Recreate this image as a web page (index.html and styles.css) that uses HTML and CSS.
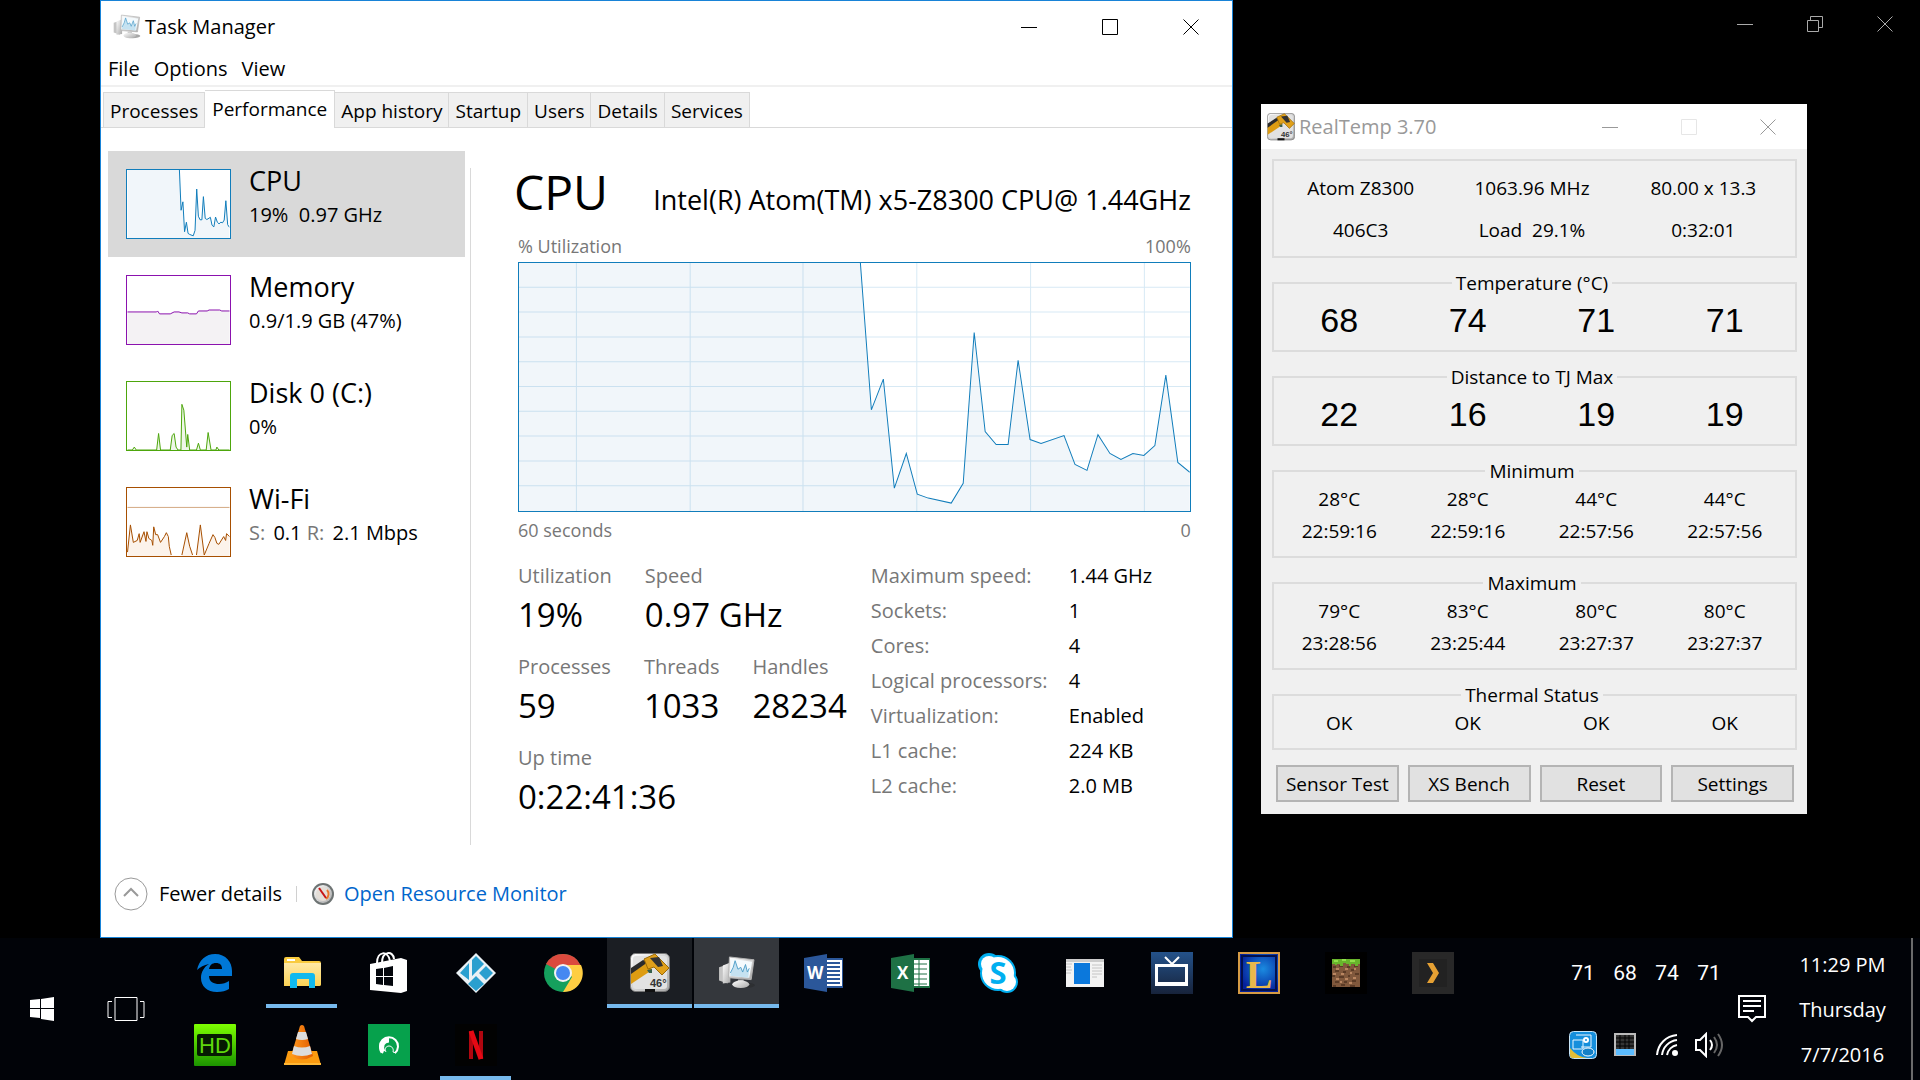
FILE: index.html
```html
<!DOCTYPE html>
<html lang="en">
<head>
	<meta charset="utf-8">
	<title>Task Manager</title>
	<link rel="stylesheet" href="styles.css">
</head>
<body>

	<!-- Shared drawings -->
	<svg class="defs" width="0" height="0" aria-hidden="true">
		<defs>
			<linearGradient id="metal" x1="0" y1="0" x2="1" y2="1">
				<stop offset="0" stop-color="#fff"/>
				<stop offset="1" stop-color="#a8a8a8"/>
			</linearGradient>
			<linearGradient id="green" x1="0" y1="0" x2="0" y2="1">
				<stop offset="0" stop-color="#7dff00"/>
				<stop offset="1" stop-color="#1c9400"/>
			</linearGradient>
			<linearGradient id="navy" x1="0" y1="0" x2="0" y2="1">
				<stop offset="0" stop-color="#24528a"/>
				<stop offset="1" stop-color="#17233b"/>
			</linearGradient>
			<linearGradient id="orange" x1="0" y1="0" x2="1" y2="0">
				<stop offset="0" stop-color="#ff9a1e"/>
				<stop offset="1" stop-color="#e35b00"/>
			</linearGradient>
			<linearGradient id="paper" x1="0" y1="0" x2="0" y2="1">
				<stop offset="0" stop-color="#ffe9a6"/>
				<stop offset="1" stop-color="#fbd355"/>
			</linearGradient>
			<radialGradient id="gem" cx=".6" cy=".4" r=".6">
				<stop offset="0" stop-color="#1b8be0"/>
				<stop offset="1" stop-color="#04209a"/>
			</radialGradient>
		</defs>
		<symbol id="cpu-trace" viewBox="0 0 672 250" preserveAspectRatio="none">
			<path class="area" d="M0 0H342L353 148L365 117L376 227L388 192L399 233L410 237L433 242L445 222L456 70L467 170L478 183H490L500 98L512 178L523 182L546 174L557 203L569 209L580 173L592 192L603 198L615 192L626 194L637 184L648 113L660 201L672 211V250H0Z"/>
			<path class="line" d="M342 0L353 148L365 117L376 227L388 192L399 233L410 237L433 242L445 222L456 70L467 170L478 183H490L500 98L512 178L523 182L546 174L557 203L569 209L580 173L592 192L603 198L615 192L626 194L637 184L648 113L660 201L672 211"/>
		</symbol>
		<symbol id="monitor" viewBox="0 0 40 36">
			<path d="M1 12l9-3v20l-9-3z" fill="#c4c4c4"/>
			<path d="M5 10l8-3v21l-8 1z" fill="url(#metal)"/>
			<ellipse cx="28" cy="31" rx="11" ry="3" fill="#222" opacity=".4"/>
			<path d="M21 25h6v5h-6z" fill="#bbb"/>
			<ellipse cx="24" cy="30" rx="9" ry="4" fill="url(#metal)"/>
			<path d="M12 1l26 3-3 21-24-2z" fill="url(#metal)" stroke="#b4b4b4"/>
			<path d="M14 3l22 3-3 17-21-2z" fill="#f4fafd"/>
			<path d="M13 19l3-7 2-7 3 9 3-2 2 5 3-8 2 8 2-4-1 10-19-2z" fill="#c5e2f1"/>
			<path d="M13 18l3-6 2-7 3 9 3-2 2 5 3-8 2 8 2-4" fill="none" stroke="#4f9dc8"/>
		</symbol>
		<symbol id="caliper" viewBox="0 0 40 40">
			<rect x=".5" y=".5" width="39" height="38" rx="5" fill="url(#metal)" stroke="#777"/>
			<rect x="3" y="3" width="34" height="33" rx="3" fill="#e2e2e2"/>
			<path d="M1 20L18 8l4 9L1 31z" fill="#dd9c12"/>
			<path d="M1 15L13 7l5 2L1 21z" fill="#2b2b2b"/>
			<path d="M14 6L25 1l14 14-7 7-8-8-6 2z" fill="#e0a01a" stroke="#9c6b06"/>
			<path d="M20 5l9-1 4 9-5 1z" fill="#333"/>
			<path d="M17 17l5-1v4h-3z" fill="#37604d"/>
			<text x="20" y="34" class="caliper-text">46°</text>
			<path d="M15 36h10v3H15z" fill="#111"/>
		</symbol>
	</svg>

	<div class="desktop">

		<!-- Caption buttons of the maximised window behind -->
		<div class="caption-buttons back">
			<button class="cap" aria-label="Minimize"><svg width="16" height="16"><path d="M0 8.500h16"/></svg></button>
			<button class="cap" aria-label="Restore"><svg width="16" height="16"><path d="M.5 4.500h11v11H.500zM3.500 4V.5h12v11h-4"/></svg></button>
			<button class="cap" aria-label="Close"><svg width="16" height="16"><path d="M.5.500l15 15m0-15l-15 15"/></svg></button>
		</div>

		<section class="window taskmgr">
			<header class="titlebar">
				<svg class="app-icon" width="28" height="26"><use href="#monitor"/></svg>
				<span class="title">Task Manager</span>
				<div class="caption-buttons">
					<button class="cap" aria-label="Minimize"><svg width="16" height="16"><path d="M0 8.500h16"/></svg></button>
					<button class="cap" aria-label="Maximize"><svg width="16" height="16"><path d="M.5.500h15v15H.500z"/></svg></button>
					<button class="cap" aria-label="Close"><svg width="16" height="16"><path d="M.5.500l15 15m0-15l-15 15"/></svg></button>
				</div>
			</header>

			<nav class="menu">
				<button>File</button>
				<button>Options</button>
				<button>View</button>
			</nav>

			<div class="tabs">
				<button class="tab">Processes</button>
				<button class="tab active">Performance</button>
				<button class="tab">App history</button>
				<button class="tab">Startup</button>
				<button class="tab">Users</button>
				<button class="tab">Details</button>
				<button class="tab">Services</button>
			</div>

			<div class="page">
				<nav class="resources">
					<button class="resource selected">
						<svg class="thumb cpu" viewBox="0 0 105 70"><use href="#cpu-trace" width="105" height="70"/></svg>
						<span class="info"><span class="name">CPU</span><span class="detail">19%&nbsp; 0.97 GHz</span></span>
					</button>
					<button class="resource">
						<svg class="thumb memory" viewBox="0 0 105 70">
							<path class="area" d="M0 37H31L33 39H44L48 37L62 38L64 39H71L73 36L84 35H95L105 36V70H0Z"/>
							<path class="line" d="M0 37H30L31 36L33 39H44L48 37H53L56 38H62L64 39H71L73 36H82L84 35H95L97 36H105"/>
						</svg>
						<span class="info"><span class="name">Memory</span><span class="detail">0.9/1.9 GB (47%)</span></span>
					</button>
					<button class="resource">
						<svg class="thumb disk" viewBox="0 0 105 70">
							<path class="area line" d="M0 70H5L7 67L9 70H30L32 53L34 70H44L46 55L48 53L50 67L52 70H55L56 23L58 29L61 67L62 54L64 70H71L73 63L75 70H81L83 52L86 70H91L92 67L94 70H105"/>
						</svg>
						<span class="info"><span class="name">Disk 0 (C:)</span><span class="detail">0%</span></span>
					</button>
					<button class="resource">
						<svg class="thumb wifi" viewBox="0 0 105 70">
							<path class="area" d="M0 70L3 38L6 56L17 46L26 59L27 40L34 56L40 46L45 70ZM56 70L61 46L67 70ZM71 70L75 38L79 70L88 48L94 58L102 47L105 50V70Z"/>
							<path class="level" d="M0 20H105"/>
							<path class="line" d="M0 66L3 38L6 56L10 54L12 47L13 56L17 45L19 55L20 45L22 52L25 54L26 59L27 40L29 48H31L34 56L38 50L40 46L42 50L43 60L45 69M56 69L61 46L64 60L67 69M71 69L75 38L79 69L84 57L88 48L90 51L92 57L94 58L99 50L101 54L102 47L105 50"/>
						</svg>
						<span class="info"><span class="name">Wi-Fi</span><span class="detail"><i>S:</i> 0.1 <i>R:</i> 2.1 Mbps</span></span>
					</button>
				</nav>

				<main class="panel">
					<div class="heading">
						<h1>CPU</h1>
						<h2>Intel(R) Atom(TM) x5-Z8300 CPU@ 1.44GHz</h2>
					</div>
					<div class="scale"><span>% Utilization</span><span>100%</span></div>
					<svg class="chart cpu" viewBox="0 0 672 250" preserveAspectRatio="none">
						<use href="#cpu-trace" width="672" height="250"/>
						<path class="grid" d="M57.500 0V250M171.500 0V250M284.500 0V250M398.500 0V250M512.500 0V250M626.500 0V250M0 24.500H672M0 49.500H672M0 74.500H672M0 99.500H672M0 124.500H672M0 149.500H672M0 174.500H672M0 199.500H672M0 224.500H672"/>
					</svg>
					<div class="scale bottom"><span>60 seconds</span><span>0</span></div>

					<div class="stats">
						<div class="counters">
							<dl class="pair">
								<div><dt>Utilization</dt><dd>19%</dd></div>
								<div><dt>Speed</dt><dd>0.97 GHz</dd></div>
							</dl>
							<dl class="pair">
								<div><dt>Processes</dt><dd>59</dd></div>
								<div><dt>Threads</dt><dd>1033</dd></div>
								<div><dt>Handles</dt><dd>28234</dd></div>
							</dl>
							<dl class="pair">
								<div><dt>Up time</dt><dd>0:22:41:36</dd></div>
							</dl>
						</div>
						<table class="specs">
							<tr><th>Maximum speed:</th><td>1.44 GHz</td></tr>
							<tr><th>Sockets:</th><td>1</td></tr>
							<tr><th>Cores:</th><td>4</td></tr>
							<tr><th>Logical processors:</th><td>4</td></tr>
							<tr><th>Virtualization:</th><td>Enabled</td></tr>
							<tr><th>L1 cache:</th><td>224 KB</td></tr>
							<tr><th>L2 cache:</th><td>2.0 MB</td></tr>
						</table>
					</div>
				</main>
			</div>

			<footer class="footer">
				<button class="fewer">
					<svg width="34" height="34"><circle cx="17" cy="17" r="16" fill="none" stroke="#999"/><path d="M10 19l7-7 7 7" fill="none" stroke="#999" stroke-width="2"/></svg>
					Fewer details
				</button>
				<span class="divider"></span>
				<a class="monitor-link" href="#">
					<svg width="24" height="24" viewBox="0 0 24 24">
						<circle cx="12" cy="12" r="11" fill="#6d7373"/>
						<circle cx="12" cy="12" r="9" fill="url(#metal)"/>
						<circle cx="12" cy="12" r="7" fill="#e4ded7"/>
						<path d="M16 8a6 6 0 0 1-1 9" fill="none" stroke="#e8762c" stroke-width="2"/>
						<path d="M8 6l7 10" stroke="#c81414" stroke-width="2"/>
					</svg>
					Open Resource Monitor
				</a>
			</footer>
		</section>

		<section class="window realtemp">
			<header class="titlebar">
				<svg class="app-icon" width="28" height="28"><use href="#caliper"/></svg>
				<span class="title">RealTemp 3.70</span>
				<div class="caption-buttons">
					<button class="cap" aria-label="Minimize"><svg width="16" height="16"><path d="M0 8.500h16"/></svg></button>
					<button class="cap" aria-label="Maximize" disabled><svg width="16" height="16"><path d="M.5.500h15v15H.500z"/></svg></button>
					<button class="cap" aria-label="Close"><svg width="16" height="16"><path d="M.5.500l15 15m0-15l-15 15"/></svg></button>
				</div>
			</header>
			<div class="client">
				<fieldset class="summary">
					<div class="cells three"><span>Atom Z8300</span><span>1063.96 MHz</span><span>80.00 x 13.3</span></div>
					<div class="cells three"><span>406C3</span><span>Load&nbsp; 29.1%</span><span>0:32:01</span></div>
				</fieldset>
				<fieldset>
					<legend>Temperature (°C)</legend>
					<div class="cells big"><span>68</span><span>74</span><span>71</span><span>71</span></div>
				</fieldset>
				<fieldset>
					<legend>Distance to TJ Max</legend>
					<div class="cells big"><span>22</span><span>16</span><span>19</span><span>19</span></div>
				</fieldset>
				<fieldset>
					<legend>Minimum</legend>
					<div class="cells"><span>28°C</span><span>28°C</span><span>44°C</span><span>44°C</span></div>
					<div class="cells"><span>22:59:16</span><span>22:59:16</span><span>22:57:56</span><span>22:57:56</span></div>
				</fieldset>
				<fieldset>
					<legend>Maximum</legend>
					<div class="cells"><span>79°C</span><span>83°C</span><span>80°C</span><span>80°C</span></div>
					<div class="cells"><span>23:28:56</span><span>23:25:44</span><span>23:27:37</span><span>23:27:37</span></div>
				</fieldset>
				<fieldset>
					<legend>Thermal Status</legend>
					<div class="cells"><span>OK</span><span>OK</span><span>OK</span><span>OK</span></div>
				</fieldset>
				<div class="actions">
					<button>Sensor Test</button>
					<button>XS Bench</button>
					<button>Reset</button>
					<button>Settings</button>
				</div>
			</div>
		</section>
	</div>

	<!-- Taskbar -->
	<div class="taskbar">
		<button class="shell" aria-label="Start">
			<svg width="24" height="24" fill="#fff"><path d="M0 3l10-1v9H0zM11 2l13-2v11H11zM0 12h10v9L0 20zM11 12h13v12l-13-2z"/></svg>
		</button>
		<button class="shell" aria-label="Task View">
			<svg width="38" height="26" fill="none" stroke="#fff"><path d="M8 1.500h22v23H8zM5 5.500H1v16h4M33 5.500h4v16h-4"/></svg>
		</button>
		<div class="apps">
			<button class="app" aria-label="Edge">
				<svg width="42" height="42"><path d="M3 18C5 8 12 2 21 2c11 0 17 8 17 17v5H15c0 6 5 8 10 8 4 0 7-1 10-3v8c-3 2-7 3-12 3C13 40 7 34 7 26c0-6 3-11 8-14-5 1-9 3-12 6zm12-1h13c0-4-2-6-6-6s-6 2-7 6z" fill="#0078d7"/></svg>
			</button>
			<button class="app running" aria-label="File Explorer">
				<svg width="42" height="42"><path d="M3 7q0-2 2-2h13l3 4h17q2 0 2 2v21q0 2-2 2H3z" fill="#f9cb3f"/><path d="M3 11h37v21q0 2-2 2H5q-2 0-2-2z" fill="url(#paper)"/><path d="M6 8h8" stroke="#fff" stroke-width="2"/><path d="M9 36V24q0-3 3-3h19q3 0 3 3v12h-6v-9H16v9z" fill="#10b9ee"/></svg>
			</button>
			<button class="app" aria-label="Store">
				<svg width="42" height="42"><path d="M9 11C9-1 20-2 22 9M14 11c0-12 11-13 12-4" fill="none" stroke="#fff" stroke-width="2"/><path d="M2 12l31-6 6 2v31l-6 2-31-3z" fill="#fff"/><path d="M8 17l7-1v8H8zM16 16l9-2v10h-9zM8 25h7v8l-7-1zM16 25h9v9l-9-1z" fill="#03060c"/></svg>
			</button>
			<button class="app" aria-label="Kodi">
				<svg width="42" height="42"><path d="M21 1l20 20-20 20L1 21z" fill="#e9f1f5"/><path d="M21 4l8 8-12 12V8zM14 11v17l-9-7zM31 14l7 7-7 7-7-7zM21 24l8 8-8 7-8-7z" fill="#2a9fcf"/></svg>
			</button>
			<button class="app" aria-label="Chrome">
				<svg width="42" height="42" viewBox="0 0 42 42"><circle cx="21" cy="21" r="19" fill="#15a05d"/><path d="M21 21L4 12A19.500 19.500 0 0 1 38.500 13z" fill="#db4a3e"/><path d="M21 13h18a19 19 0 0 1-18 27l9-15z" fill="#ffce42"/><circle cx="21" cy="21" r="9" fill="#f3f3f3"/><circle cx="21" cy="21" r="7" fill="#4688f1"/></svg>
			</button>
			<button class="app running window-open" aria-label="RealTemp">
				<svg width="40" height="40"><use href="#caliper"/></svg>
			</button>
			<button class="app running focused" aria-label="Task Manager">
				<svg width="38" height="34"><use href="#monitor"/></svg>
			</button>
			<button class="app" aria-label="Word">
				<svg width="42" height="42"><path d="M20 6h20v30H20z" fill="#2b579a"/><path d="M23 8h16v26H23z" fill="#fff"/><path d="M23 11h14M23 15h14M23 19h14M23 23h14M23 27h14M23 31h14" stroke="#2b579a" stroke-width="2"/><path d="M1 6l23-4v38L1 36z" fill="#2b579a"/><text x="4" y="27" class="office">W</text></svg>
			</button>
			<button class="app" aria-label="Excel">
				<svg width="42" height="42"><path d="M20 6h20v30H20z" fill="#1e7145"/><path d="M23 8h16v26H23z" fill="#fff"/><path d="M23 12h14M23 17h14M23 22h14M23 27h14M23 32h14M29 8v26" stroke="#1e7145"/><path d="M1 6l23-4v38L1 36z" fill="#1e7145"/><text x="7" y="27" class="office">X</text></svg>
			</button>
			<button class="app" aria-label="Skype">
				<svg width="42" height="42"><circle cx="12" cy="12" r="11" fill="#00aff0"/><circle cx="30" cy="30" r="11" fill="#00aff0"/><circle cx="21" cy="21" r="18" fill="#00aff0"/><circle cx="12" cy="12" r="8" fill="#fff"/><circle cx="30" cy="30" r="9" fill="#fff"/><circle cx="21" cy="21" r="16" fill="#fff"/><text x="21" y="32" class="skype">S</text></svg>
			</button>
			<button class="app" aria-label="News">
				<svg width="42" height="42"><path d="M2 7h38v28H2z" fill="#f3f3f3"/><path d="M2 7h38v3H2z" fill="#ccc"/><path d="M2 12h6M2 15h5M2 18h6M2 21h5M28 13h10M28 16h10M28 19h10M28 22h10M28 25h5" stroke="#c4c4c4"/><path d="M10 11h16v21H10z" fill="#0b78dc"/></svg>
			</button>
			<button class="app" aria-label="TV">
				<svg width="42" height="42"><path d="M0 0h42v42H0z" fill="url(#navy)"/><path d="M14 5l7 7 7-7" fill="none" stroke="#fff" stroke-width="2"/><path d="M5.500 13.500h30v19h-30z" fill="none" stroke="#fff" stroke-width="3"/><path d="M5 30h31v4H5z" fill="#fff"/></svg>
			</button>
			<button class="app" aria-label="League of Legends">
				<svg width="42" height="42"><path d="M1 1h40v40H1z" fill="url(#gem)" stroke="#d59b45" stroke-width="2"/><path d="M4 4h34v34H4z" fill="none" stroke="#02104d" stroke-width="2"/><text x="21" y="36" class="league">L</text></svg>
			</button>
			<button class="app" aria-label="Minecraft">
				<svg width="42" height="42"><path d="M0 0h42v42H0z" fill="#000"/><path d="M7 7h28v28H7z" fill="#80583c"/><path d="M8 15h3M14 14h4M22 15h3M29 14h4M10 19h4M18 20h3M26 18h3M7 24h3M14 25h5M23 24h2M30 22h4M10 30h4M19 30h3M27 29h4M8 34h3M16 33h4M25 34h5" stroke="#5b3b26" stroke-width="2"/><path d="M11 17h3M20 17h3M29 17h2M8 22h3M16 22h3M25 21h2M11 27h3M20 27h3M28 26h3M15 30h2M24 31h3" stroke="#b98661" stroke-width="2"/><path d="M7 7h28v5h-2v2h-3v-2h-4v2h-2v-2h-3v-1h-3v3h-3v-2h-3v1h-2v-1H7z" fill="#68b52c"/><path d="M9 9h4M17 8h4M25 9h5" stroke="#90e04a" stroke-width="2"/></svg>
			</button>
			<button class="app" aria-label="Plex">
				<svg width="42" height="42"><path d="M0 0h42v42H0z" fill="#282828"/><path d="M7 7h28v28H7z" fill="#222"/><path d="M15 11h6l6 10-6 10h-6l6-10z" fill="#e5a033"/></svg>
			</button>
			<button class="app" aria-label="HD">
				<svg width="42" height="42"><rect width="42" height="42" rx="1" fill="url(#green)"/><rect x="3" y="10" width="35" height="22" rx="2" fill="#061a02"/><text x="21" y="29" class="hd">HD</text></svg>
			</button>
			<button class="app" aria-label="VLC">
				<svg width="42" height="42"><path d="M7 27h29l4 14H3z" fill="#fb9b10"/><path d="M3 39h37v2H3z" fill="#ffb734"/><path d="M10 32L19 2q2-2 4 0l9 30q-11 7-22 0z" fill="url(#orange)"/><path d="M17 8h8l2 7q-6 2-12 0zM13 22q8 3 16 0l2 8q-10 4-20 0z" fill="#dcdcdc"/></svg>
			</button>
			<button class="app" aria-label="Speed">
				<svg width="42" height="42"><path d="M0 0h42v42H0z" fill="#06a14c"/><path d="M27 29a9 9 0 1 0-12 0" fill="none" stroke="#fff" stroke-width="2"/><path d="M15 28c-3-5-1-12 6-12" fill="none" stroke="#fff" stroke-width="5"/><path d="M18 28c-2-3 0-6 3-6s5 3 4 6l3 1" fill="none" stroke="#fff"/></svg>
			</button>
			<button class="app running" aria-label="Netflix">
				<svg width="42" height="42"><path d="M0 0h42v42H0z" fill="#020202"/><path d="M16 7v28M26 7v28" stroke="#b1060f" stroke-width="4"/><path d="M16 7l10 28" stroke="#e50914" stroke-width="5"/></svg>
			</button>
		</div>

		<div class="tray">
			<span class="temp">71</span>
			<span class="temp">68</span>
			<span class="temp">74</span>
			<span class="temp">71</span>
			<svg width="28" height="28"><rect x=".5" y=".5" width="27" height="27" rx="4" fill="#168fdc" stroke="#c9e5f7"/><path d="M1 17q7 9 17 10H4q-3 0-3-3z" fill="#e3bd35"/><path d="M7 4h15v12H12M4 9h10v9H4z" fill="none" stroke="#e9f6ff"/><circle cx="17" cy="9" r="2" fill="none" stroke="#fff" stroke-width="2"/><ellipse cx="19" cy="21" rx="6" ry="4" fill="#1581c7" stroke="#fff"/></svg>
			<svg width="22" height="24"><path d="M1 1h20v21H1z" fill="#343434" stroke="#bbb" stroke-width="2"/><path d="M2 5h18M2 9h18M2 13h18M6 2v14M11 2v14M15 2v14" stroke="#000"/><path d="M2 16h18v6H2z" fill="#5cbcff"/></svg>
			<svg width="22" height="22" fill="none" stroke="#fff" stroke-width="2"><path d="M1 21C2 10 10 2 21 1M6 21C7 13 13 7 21 6M11 21c1-5 5-9 10-10"/><circle cx="19" cy="19" r="2" fill="#fff"/></svg>
			<svg width="30" height="26" fill="none" stroke-width="2"><path d="M2 8h4l6-6v22l-6-6H2z" stroke="#fff"/><path d="M16 8q4 5 0 10" stroke="#fff"/><path d="M20 5q6 8 0 16M24 2q8 11 0 22" stroke="#666"/></svg>
		</div>
		<button class="notify" aria-label="Notifications">
			<svg width="28" height="28" fill="none" stroke="#fff" stroke-width="2"><path d="M1 1h26v21h-9l-4 4-4-4H1zM5 6h18M5 11h18M5 16h11"/></svg>
		</button>
		<div class="clock"><span>11:29 PM</span><span>Thursday</span><span>7/7/2016</span></div>
		<button class="show-desktop" aria-label="Show desktop"></button>
	</div>

</body>
</html>
```

FILE: styles.css
```css
* { box-sizing: border-box; }
body { margin: 0; height: 100vh; display: flex; flex-direction: column; background: #000; font: 20px/28px "Open Sans", "Noto Sans", sans-serif; color: #000; overflow: hidden; }
button { margin: 0; padding: 0; border: 0; background: none; font: inherit; color: inherit; }
svg { display: block; flex: none; }
h1, h2, dl, dd { margin: 0; font-weight: normal; }
.defs { position: absolute; }

/* Windows */

.desktop { flex: 1; min-height: 0; position: relative; }
.window { position: absolute; display: flex; flex-direction: column; background: #fff; }
.titlebar { display: flex; align-items: center; }
.title { margin-left: 4px; }
.caption-buttons { display: flex; margin-left: auto; }
.cap { width: 81px; height: 50px; display: flex; align-items: center; justify-content: center; }
.cap path { fill: none; stroke: #000; }
.back { position: absolute; top: 0; right: 0; }
.back .cap { width: 70px; height: 48px; }
.back path { stroke: #aaa; }

/* Task Manager */

.taskmgr { left: 100px; top: 0; bottom: 0; width: 59%; border: 1px solid #1883d7; }
.taskmgr .titlebar { height: 51px; padding-left: 12px; }
.menu { display: flex; gap: 14px; height: 35px; padding-left: 7px; border-bottom: 2px solid #f0f0f0; }
.menu button { height: 34px; }
.tabs { display: flex; align-items: flex-end; height: 41px; padding-left: 2px; border-bottom: 1px solid #d9d9d9; font-size: 19px; }
.tab { height: 35px; padding: 2px 6px 0; background: #f0f0f0; border: 1px solid #d9d9d9; border-width: 1px 1px 0 0; }
.tab:first-child { border-left-width: 1px; }
.tab.active { height: 38px; margin-bottom: -1px; padding: 0 7px 2px; background: #fff; }
.page { flex: 1; display: flex; }
.resources { width: 357px; margin: 23px 5px 0 7px; flex: none; }
.resource { display: flex; width: 100%; height: 106px; gap: 18px; padding: 12px 18px; text-align: left; align-items: flex-start; }
.resource.selected { background: #d9d9d9; }
.thumb { width: 105px; height: 70px; margin-top: 6px; background: #fff; border: 1px solid; }
.info { display: flex; flex-direction: column; white-space: nowrap; }
.name { font-size: 27px; line-height: 36px; }
.detail { line-height: 32px; }
.detail i { margin-right: 3px; font-style: normal; color: #777; }
.area { stroke: none; }
.line { fill: none; stroke: currentColor; vector-effect: non-scaling-stroke; }
.cpu { color: #117dbb; }
#cpu-trace .area { fill: #f1f6fa; }
.memory { color: #8b12ae; }
.memory .area { fill: #f4f2f4; }
.disk { color: #4da60c; }
.disk .area { fill: #eff7e9; stroke: currentColor; }
.wifi { color: #a74f01; }
.wifi .area { fill: #fcf3eb; }
.level { stroke: #d3a780; }

.panel { flex: 1; min-width: 0; margin: 40px 0 6px; padding: 0 41px 0 47px; border-left: 1px solid #d9d9d9; }
.heading { display: flex; align-items: baseline; justify-content: space-between; margin: 0 0 16px -4px; white-space: nowrap; }
h1 { font-size: 48px; line-height: 48px; }
h2 { font-size: 27px; line-height: 28px; }
.scale { display: flex; justify-content: space-between; margin-bottom: 2px; font-size: 18px; color: #777; }
.scale.bottom { margin: 4px 0 18px; }
.chart { width: 100%; height: 250px; border: 1px solid; }
.grid { fill: none; stroke: #117dbb; stroke-opacity: .17; vector-effect: non-scaling-stroke; }
.stats { display: flex; justify-content: space-between; }
.pair { display: flex; gap: 33px; margin-bottom: 13px; }
dt { color: #777; }
dd { font-size: 33px; line-height: 50px; }
.specs { width: 320px; border-spacing: 0; margin-top: -4px; align-self: flex-start; }
.specs th, .specs td { padding: 0; font-weight: normal; text-align: left; line-height: 35px; white-space: nowrap; }
.specs th { width: 198px; color: #777; }
.footer { display: flex; align-items: center; height: 86px; padding-left: 13px; }
.fewer, .monitor-link { display: flex; align-items: center; gap: 11px; }
.monitor-link { gap: 9px; color: #0066cc; text-decoration: none; }
.divider { width: 1px; height: 16px; margin: 0 14px; background: #d0d0d0; }

/* RealTemp */

.realtemp { top: 104px; right: 113px; width: 546px; background: #f0f0f0; }
.realtemp .titlebar { height: 45px; padding-left: 6px; background: #fff; color: #999; }
.realtemp .cap { width: 79px; height: 45px; }
.realtemp .cap path { stroke: #999; }
.realtemp .cap:disabled path { stroke: #e6e6e6; }
.client { display: flex; flex-direction: column; gap: 13px; padding: 10px 10px 12px 11px; font-size: 19px; }
fieldset { min-width: 0; margin: 0; padding: 0 6px 9px 1px; border: 2px solid #dcdcdc; }
legend { height: 24px; margin: 0 auto; padding: 0 4px; line-height: 24px; }
.cells { display: grid; grid-template-columns: repeat(4, 1fr); text-align: center; line-height: 32px; }
.cells.three { grid-template-columns: repeat(3, 1fr); line-height: 42px; }
.cells.big { padding-top: 4px; font: 34px/42px "Liberation Sans", Arial, sans-serif; }
.summary { padding-top: 6px; padding-bottom: 5px; }
.actions { display: flex; gap: 9px; margin: 2px 3px 0 4px; }
.actions button { flex: 1; height: 37px; background: #e1e1e1; border: 2px solid #b4b4b4; }
.caliper-text { font: bold 11px "Liberation Sans", sans-serif; fill: #333; }

/* Taskbar */

.taskbar { flex: none; display: flex; height: 142px; background: #010308; color: #fff; }
.shell { width: 84px; display: flex; align-items: center; justify-content: center; }
.apps { flex: 1; display: grid; grid-template-columns: repeat(auto-fill, 85px); grid-auto-rows: 70px; gap: 2px; margin: 0 20px 0 4px; }
.app { display: flex; align-items: center; justify-content: center; }
.app.running { background: linear-gradient(#76b9ed, #76b9ed) bottom / 71px 4px no-repeat; }
.app.window-open { background-size: 85px 4px; background-color: #1b1e23; }
.app.focused { background-size: 85px 4px; background-color: #34373c; }
.office { font: bold 17px "Open Sans", sans-serif; fill: #fff; }
.skype { font: bold 31px "Open Sans", sans-serif; fill: #00aff0; text-anchor: middle; }
.league { font: bold 40px "Liberation Serif", serif; fill: #e8b84b; text-anchor: middle; }
.hd { font: 22px "Liberation Sans", sans-serif; fill: #5fd80c; text-anchor: middle; }
.tray { display: grid; grid-template-columns: repeat(4, 42px); grid-template-rows: 70px 70px; gap: 2px 0; align-items: center; justify-items: center; }
.temp { font: 21px/28px Roboto, "Liberation Sans", sans-serif; }
.notify { width: 44px; display: flex; align-items: center; justify-content: center; }
.clock { width: 137px; display: flex; flex-direction: column; justify-content: center; text-align: center; line-height: 45px; }
.show-desktop { width: 9px; border-left: 2px solid #6b6b6b; }
```
